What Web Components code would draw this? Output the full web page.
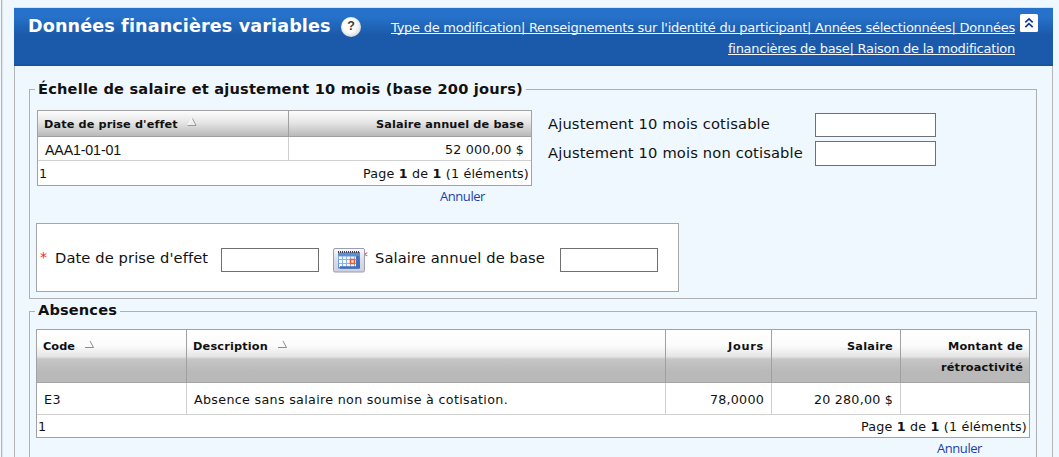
<!DOCTYPE html>
<html lang="fr">
<head>
<meta charset="utf-8">
<title>Données financières variables</title>
<style>
html,body{margin:0;height:457px;overflow:hidden;background:#f0f8ff}
body{font-family:"DejaVu Sans",Verdana,sans-serif;color:#111}
</style>
</head>
<body>
<page-frame>
  <section-panel>
    <panel-header slot="header"></panel-header>
    <field-group class="salary" style="height:210px">
      <fit-text slot="legend" w="485" size="14.6" bold>Échelle de salaire et ajustement 10 mois (base 200 jours)</fit-text>
      <salary-section></salary-section>
    </field-group>
    <field-group style="height:180px;margin-top:12px">
      <fit-text slot="legend" w="79" size="14.6" bold style="line-height:18px">Absences</fit-text>
      <absence-section></absence-section>
    </field-group>
  </section-panel>
</page-frame>
<script>
const define = (name, html, setup) => customElements.define(name, class extends HTMLElement {
  connectedCallback() {
    if (this.shadowRoot) return;
    this.attachShadow({mode: 'open'}).innerHTML = html;
    if (setup) setup.call(this, this.shadowRoot);
  }
});

define('page-frame', `<style>:host{display:block;box-sizing:border-box;height:457px;margin-left:1px;border-left:1px solid #b3b5b7;box-shadow:inset 1px 0 #e0e4e8;padding:7px 6px 0 12px;overflow:hidden}</style><slot></slot>`);

define('section-panel', `<style>:host{display:block}
.body{border-left:1px solid #b6b6b6;border-right:1px solid #b6b6b6;padding:23px 15px 0 14px;height:420px}</style>
<slot name="header"></slot><div class="body"><slot></slot></div>`);

define('panel-header', `<style>
:host{display:flex;align-items:flex-start;box-sizing:border-box;height:59px;border-top:1px solid #dbe3ea;background:linear-gradient(#2671c9 0,#2671c9 9px,#1b5aaa 27px,#1b5aaa 56px,#184f9e 57px,#184f9e);color:#fff;padding-left:14px}
.title{margin-top:8px}
help-icon{margin:9px 0 0 11px}
nav{margin:10px 5px 0 auto;width:624px;text-align:right;display:flex;flex-direction:column;align-items:flex-end}
nav a{color:#f2f7ff;height:21px}
collapse-button{margin:6px 15px 0 0}
</style>
<fit-text class="title" w="302" size="17.6" bold>Données financières variables</fit-text>
<help-icon></help-icon>
<nav>
<a><fit-text u w="624" size="13">Type de modification| Renseignements sur l'identité du participant| Années sélectionnées| Données</fit-text></a>
<a><fit-text u w="287" size="13">financières de base| Raison de la modification</fit-text></a>
</nav>
<collapse-button></collapse-button>`);

define('help-icon', `<style>:host{display:block;width:20px;height:20px;border-radius:50%;background:radial-gradient(circle at 45% 42%,#fff 40%,#e2e2e2 65%,#999 100%);text-align:center;font:bold 12.500px/19px "Liberation Sans",sans-serif;color:#3b3b3b}</style>?`);

define('collapse-button', `<style>:host{display:block;width:18px;height:18px}svg{display:block}</style>
<svg width="18" height="18"><rect width="18" height="18" rx="1.500" fill="#fff"/><path d="M5.300 8.300 9 4.800l3.700 3.500M5.300 13.200 9 9.700l3.700 3.500" fill="none" stroke="#123a94" stroke-width="1.700"/></svg>`);

define('field-group', `<style>:host{display:block;box-sizing:border-box;border:1px solid #aeb0b2}
.legend{display:block;width:max-content;height:20px;margin:-11px 0 0 5px;padding:0 3px;background:#f0f8ff}</style>
<div class="legend"><slot name="legend"></slot></div><slot></slot>`);

define('sort-arrow', `<style>:host{display:inline-block;width:10px;height:9px}svg{display:block}</style>
<svg width="10" height="9"></svg>`, function (root) {
  root.querySelector('svg').innerHTML = this.hasAttribute('open')
    ? '<path d="M0 7.500H8.500L5 1" fill="none" stroke="#8b8b8b"/>'
    : '<path d="M.5 7.500H9L5 .5Z" fill="#eee" stroke="#fff"/><path d="M.5 7.500H9L5.500 .5" fill="none" stroke="#999"/>';
});

define('text-box', `<style>:host{display:block}input{display:block;box-sizing:border-box;width:100%;height:100%;margin:0;padding:2px;border:1px solid #707070;background:#fff;border-radius:0;outline:0}</style><input type="text" aria-label="Valeur">`);

define('calendar-button', `<style>:host{display:block;width:32px;height:25px}svg{display:block}</style>
<svg width="32" height="25"><defs><linearGradient id="b" x2="0" y2="1"><stop stop-color="#fafaff"/><stop offset=".5" stop-color="#dcdce8"/><stop offset="1" stop-color="#cfcfdf"/></linearGradient><linearGradient id="c" x2="1" y2="1"><stop stop-color="#8db8f0"/><stop offset="1" stop-color="#2d63b8"/></linearGradient></defs>
<rect x=".5" y=".5" width="31" height="23.500" rx="1.500" fill="url(#b)" stroke="#9c9cb0"/>
<rect x="5" y="4" width="22" height="16.500" fill="url(#c)"/>
<path d="M5 4H27" stroke="#39424f" stroke-width="2" stroke-dasharray="1 1"/><path d="M5 6.500H27" stroke="#5b8ed8" stroke-width="3"/>
<path d="M6 8.500H23V19H6Z" fill="#f5f9ff"/><path d="M9.500 8V19.500M13.500 8V19.500M17.500 8V19.500M21.500 8V19.500M6 11.500H24M6 15.500H24" stroke="#8db2e8"/>
<path d="M24.500 8V19.500H7" fill="none" stroke="#3f6fb7" stroke-width="2.500"/><rect x="17.500" y="11.500" width="4" height="4" fill="#ffe9df" stroke="#f05a32" stroke-width="1.600"/></svg>`);

const grid = `:host{display:block}
.table{box-sizing:border-box;border:1px solid #a2a2a2;background:#fff}
.row{display:grid}.cell{box-sizing:border-box;border-right:1px solid #cfcfcf;display:flex;align-items:flex-start}
.cell:last-child{border-right:0}.head .cell{border-right-color:#a0a0a0}
.num{justify-content:flex-end}
.foot{display:flex;justify-content:space-between;border-top:1px solid #d0d0d0;box-sizing:border-box}
.cancel{color:#1c3fae}`;

define('salary-section', `<style>${grid}
.top{display:flex;margin:11px 0 0 7px}
.table{width:495px;height:76px}.row{grid-template-columns:251px 242px}
.head{height:26px;background:linear-gradient(#fdfdfd,#e6e6e6 45%,#b9b9b9);border-bottom:1px solid #a0a0a0;box-sizing:border-box}
.head .cell{padding:4px 7px 0 6px}.data .cell{height:23px;padding:3px 7px 0 7px}
.foot{height:25px;padding:3px 2px 0 1px}
sort-arrow{margin:3px 0 0 10px}
.cancel{display:block;margin:0 0 0 403px}
.adjust{display:grid;grid-template-columns:267px 121px;grid-template-rows:28px 25px;margin-left:16px;padding-top:3px}
.adjust text-box{height:24px}.adjust text-box:last-child{height:25px}
.adjust fit-text{margin-top:1px}.adjust .two{margin-top:2px}
.entry{display:flex;box-sizing:border-box;width:643px;height:69px;margin:17px 0 0 6px;border:1px solid #a5a7a6;background:#fff;padding:24px 0 0 3px}
.entry text-box{width:98px;height:24px}.star{color:#f22}.entry .half{margin-left:-4px}calendar-button{position:relative}
</style>
<div class="top"><div>
<div class="table"><div class="row head"><div class="cell"><fit-text w="133" size="11.3" bold>Date de prise d'effet</fit-text><sort-arrow></sort-arrow></div><div class="cell num"><fit-text w="148" size="11.3" bold>Salaire annuel de base</fit-text></div></div>
<div class="row data"><div class="cell"><fit-text w="76" size="14.2" face="Liberation Sans">AAA1-01-01</fit-text></div><div class="cell num"><fit-text w="79" size="12.7">52 000,00 $</fit-text></div></div>
<div class="foot"><fit-text w="8" size="12.7">1</fit-text><fit-text w="166" size="12.7">Page <b>1</b> de <b>1</b> (1 éléments)</fit-text></div></div>
<fit-text class="cancel" w="45" size="13" face="Open Sans">Annuler</fit-text></div>
<div class="adjust"><fit-text w="222" size="14.7">Ajustement 10 mois cotisable</fit-text><text-box></text-box><fit-text class="two" w="255" size="14.7">Ajustement 10 mois non cotisable</fit-text><text-box></text-box></div></div>
<div class="entry"><fit-text class="star" w="9" size="14" style="margin-top:-1px">*</fit-text><fit-text w="153" size="14.7" style="margin:0 0 0 6px">Date de prise d'effet</fit-text><text-box style="margin-left:13px"></text-box><calendar-button style="margin-left:14px;z-index:1"></calendar-button><fit-text class="star half" w="7" size="14" style="margin-top:-2px">*</fit-text><fit-text w="170" size="14.7" style="margin:0 0 0 7px">Salaire annuel de base</fit-text><text-box style="margin-left:15px"></text-box></div>`);

define('absence-section', `<style>${grid}
.table{width:994px;height:109px;margin:8px 0 0 6px}.row{grid-template-columns:150px 479px 106px 129px 128px}
.head{height:53px;background:linear-gradient(#fff,#fbfbfb 30%,#e5e5e5 51%,#c6c6c6 56%,#b9b9b9 80%,#b9b9b9);border-bottom:1px solid #a4a4a4;box-sizing:border-box}
.head .cell{padding:7px 7px 0 6px}.head .lines{flex-direction:column;justify-content:flex-start;align-items:flex-end;padding-right:6px}
.lines fit-text+fit-text{margin-top:1px}
.data .cell{height:31px;padding:7px 7px 0 7px}
.foot{height:23px;padding:2px 2px 0 1px}sort-arrow{margin:3px 0 0 10px}
.cancel{display:block;height:17px;line-height:20px;margin:0 0 0 907px}
</style>
<div class="table"><div class="row head"><div class="cell"><fit-text w="32" size="11.3" bold>Code</fit-text><sort-arrow open></sort-arrow></div><div class="cell"><fit-text w="75" size="11.3" bold>Description</fit-text><sort-arrow open></sort-arrow></div><div class="cell num"><fit-text w="36" size="11.3" bold>Jours</fit-text></div><div class="cell num"><fit-text w="46" size="11.3" bold>Salaire</fit-text></div><div class="cell lines"><fit-text w="75" size="11.3" bold>Montant de</fit-text><fit-text w="82" size="11.3" bold>rétroactivité</fit-text></div></div>
<div class="row data"><div class="cell"><fit-text w="17" size="12.7">E3</fit-text></div><div class="cell"><fit-text w="314" size="12.7">Absence sans salaire non soumise à cotisation.</fit-text></div><div class="cell num"><fit-text w="54" size="12.7">78,0000</fit-text></div><div class="cell num"><fit-text w="79" size="12.7">20 280,00 $</fit-text></div><div class="cell"></div></div>
<div class="foot"><fit-text w="8" size="12.7">1</fit-text><fit-text w="166" size="12.7">Page <b>1</b> de <b>1</b> (1 éléments)</fit-text></div></div>
<fit-text class="cancel" w="45" size="13" face="Open Sans">Annuler</fit-text>`);

/* Spreads its slotted text over the width given by "w". */
define('fit-text', `<style>:host{display:block;flex:none;height:20px;line-height:20px;white-space:nowrap}span{display:inline-block}:host([u]) span{text-decoration:underline;text-underline-offset:1px;text-decoration-skip-ink:none}</style><span><slot></slot></span>`, function (root) {
  const span = root.querySelector('span'), w = +this.getAttribute('w');
  this.style.width = w + 'px';
  this.style.fontSize = this.getAttribute('size') + 'px';
  if (this.hasAttribute('bold')) this.style.fontWeight = 'bold';
  if (this.hasAttribute('face')) this.style.fontFamily = `"${this.getAttribute('face')}", sans-serif`;
  const n = this.textContent.length;
  if (n > 1) span.style.letterSpacing = (w - span.getBoundingClientRect().width) / n + 'px';
});
</script>
</body>
</html>
